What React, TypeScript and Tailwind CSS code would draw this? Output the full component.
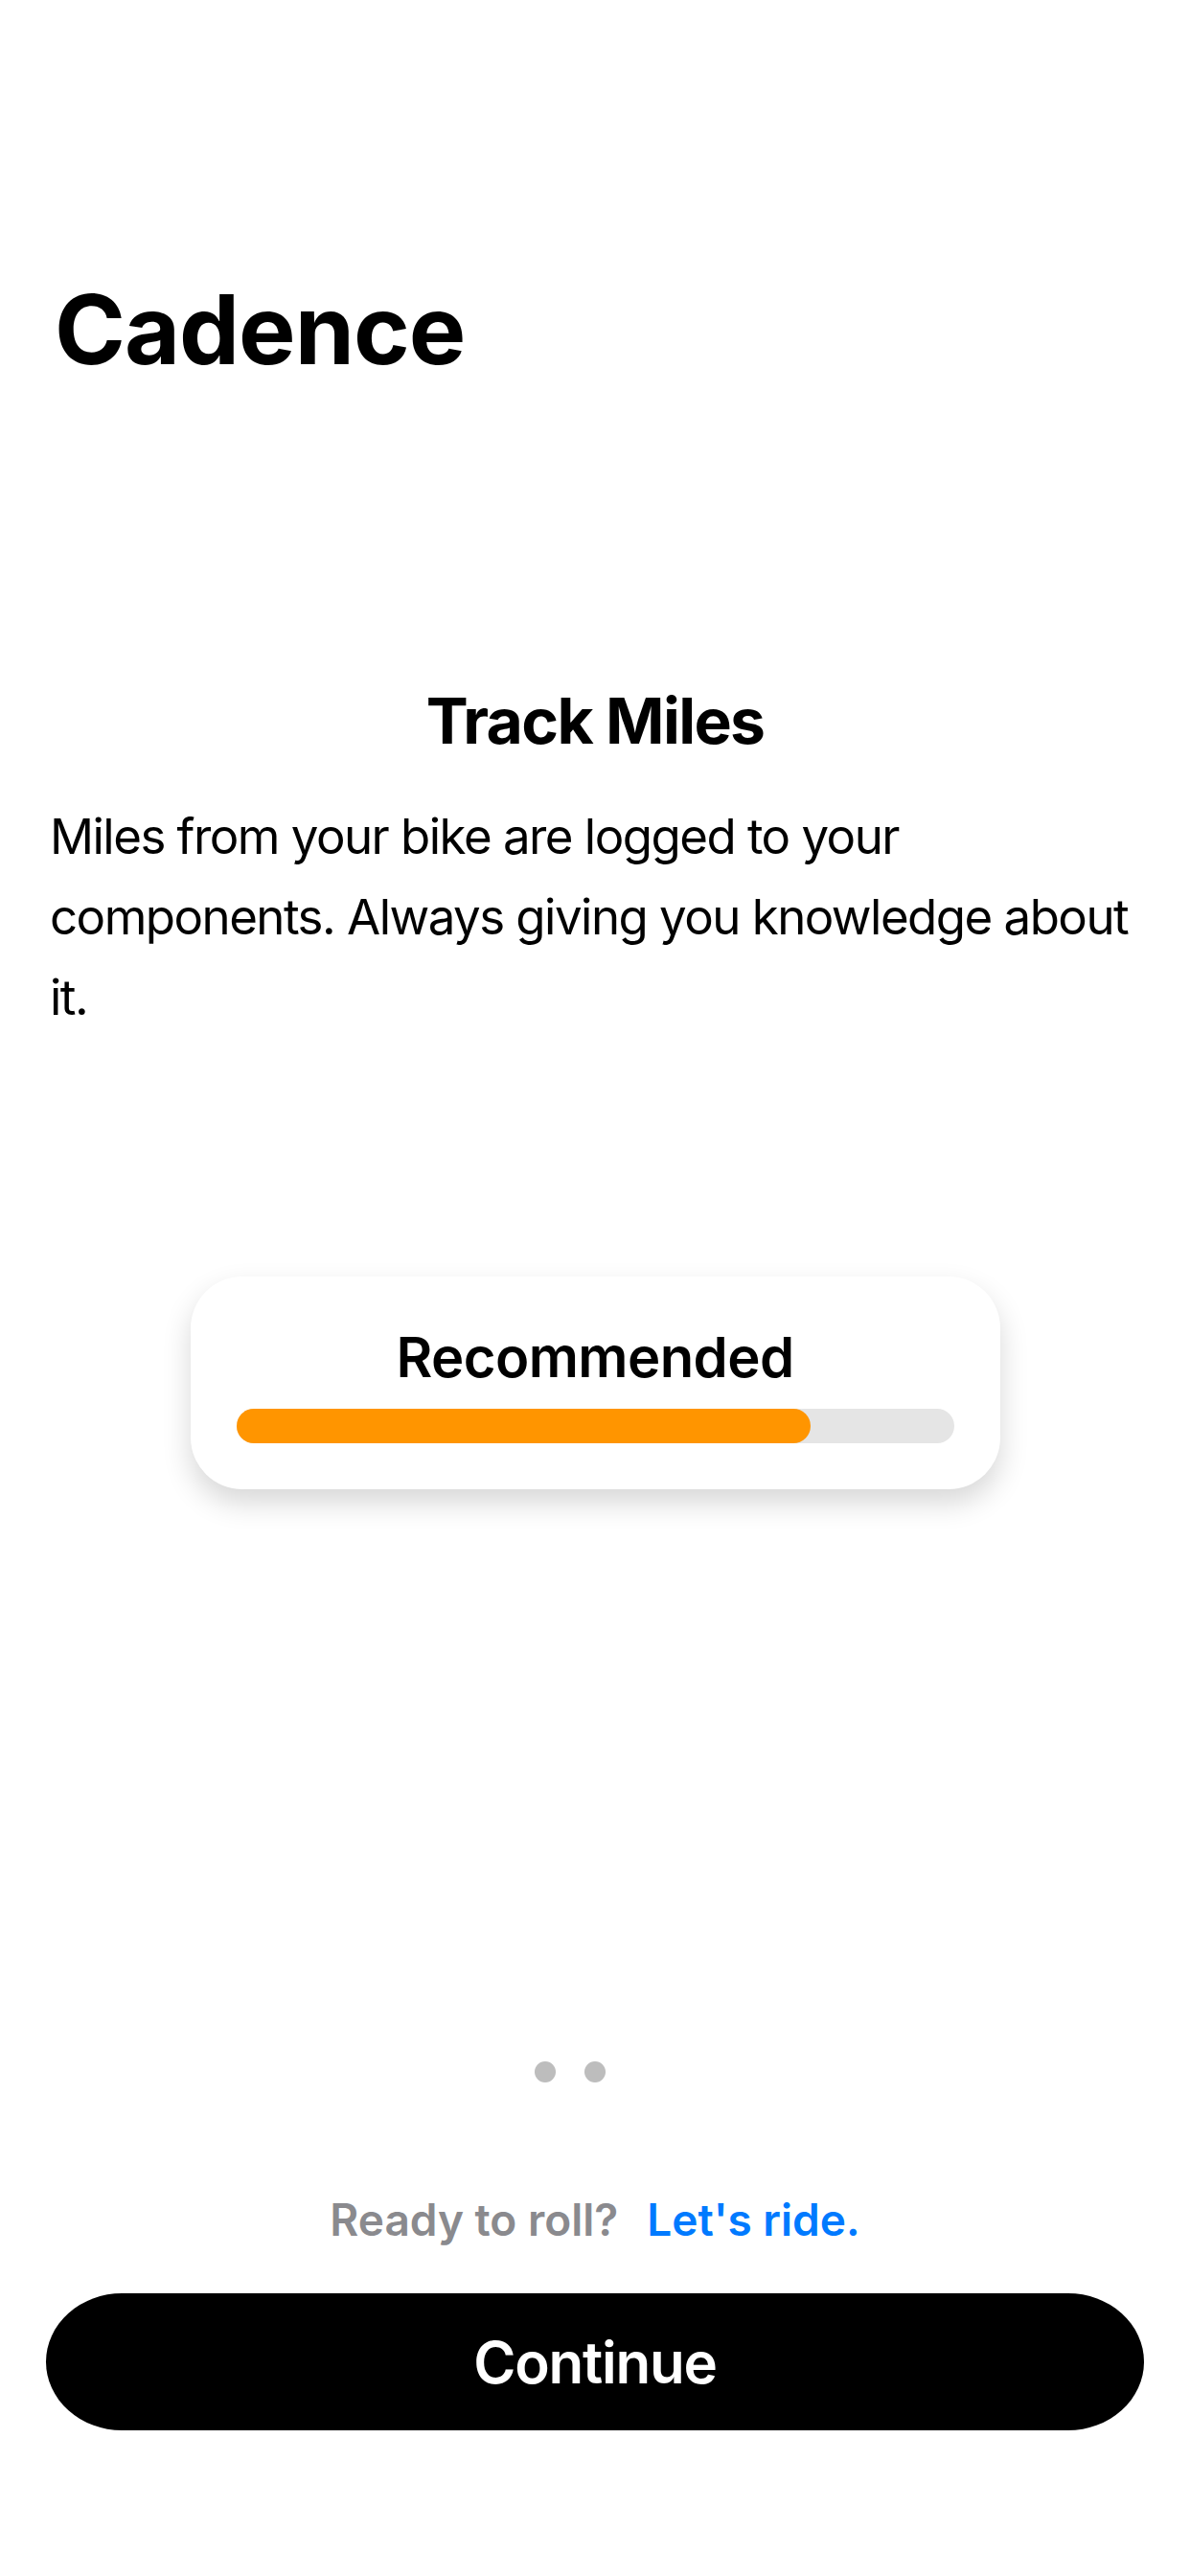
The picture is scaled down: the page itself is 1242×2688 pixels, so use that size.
import React from "react";

const pages = [true, true, false];

export default function App() {
  return (
    <div className="w-[1242px] h-[2688px] bg-white text-black font-['Inter','Liberation_Sans',sans-serif] flex flex-col">
      {/* Large navigation title */}
      <h1 className="pt-[284px] pl-[57px] text-[100px] leading-[120px] font-bold tracking-[-0.01em]">
        Cadence
      </h1>

      {/* Onboarding page */}
      <h2 className="mt-[309px] text-center text-[66px] leading-[79px] font-bold tracking-[-0.025em]">
        Track Miles
      </h2>
      <p className="mt-[39px] px-[52px] text-[51px] leading-[84px] tracking-[-0.03em]">
        Miles from your bike are logged to your components. Always giving you knowledge about it.
      </p>

      <div className="mt-[249px] mx-auto w-[845px] rounded-[54px] bg-white p-12 shadow-[0_14px_30px_rgba(0,0,0,0.16)]">
        <div className="text-center text-[58px] leading-[72px] font-semibold tracking-[-0.01em]">
          Recommended
        </div>
        <div className="mt-[18px] h-[36px] w-full rounded-full bg-[#e5e5e5]">
          <div className="h-full w-[80%] rounded-full bg-[#ff9500]" />
        </div>
      </div>

      {/* Page indicator */}
      <div className="mt-[597px] flex justify-center gap-[30px]">
        {pages.map((on, i) => (
          <span
            key={i}
            className={on ? "w-[22px] h-[22px] rounded-full bg-[#bdbdbd]" : "w-[22px] h-[22px] rounded-full bg-white"}
          />
        ))}
      </div>

      <div className="mt-[116px] flex justify-center gap-[30px] text-[46px] leading-[54px] font-semibold">
        <span className="text-[#8a8a8e]">Ready to roll?</span>
        <span className="text-[#007aff]">Let's ride.</span>
      </div>

      <button className="mt-[50px] mx-[48px] h-[143px] rounded-[80px/72px] bg-black text-white text-[60px] font-semibold tracking-[-0.02em]">
        Continue
      </button>
    </div>
  );
}
